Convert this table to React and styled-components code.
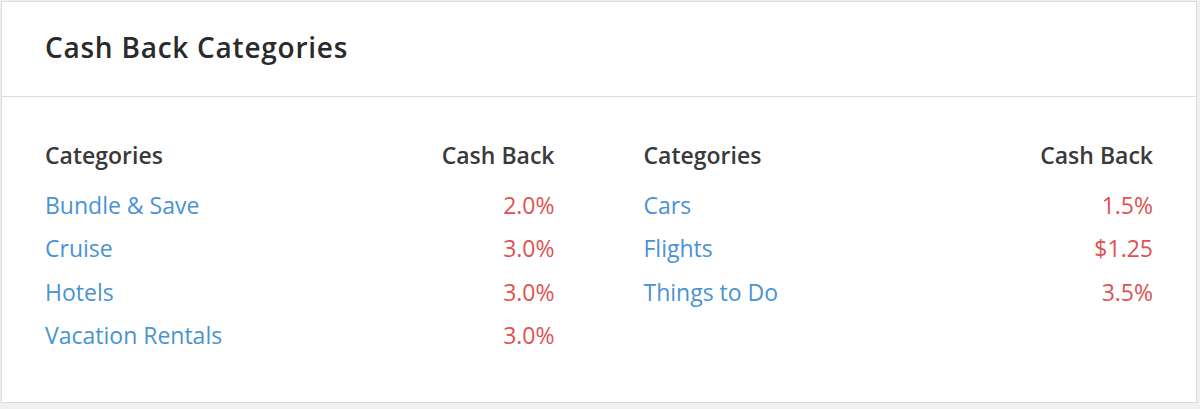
import styled, { createGlobalStyle } from "styled-components";

const GlobalStyle = createGlobalStyle`
  html, body {
    margin: 0;
    padding: 0;
    background: #f0f0f0;
  }
  body {
    font-family: "Open Sans", "Liberation Sans", sans-serif;
  }
`;

const leftColumn = [
  { name: "Bundle & Save", value: "2.0%" },
  { name: "Cruise", value: "3.0%" },
  { name: "Hotels", value: "3.0%" },
  { name: "Vacation Rentals", value: "3.0%" },
];

const rightColumn = [
  { name: "Cars", value: "1.5%" },
  { name: "Flights", value: "$1.25" },
  { name: "Things to Do", value: "3.5%" },
];

const Page = styled.div`
  padding: 1px 3px 0 1px;
  height: 409px;
  box-sizing: border-box;
`;

const Card = styled.section`
  background: #fff;
  border: 1px solid #dcdcdc;
  height: 402px;
  box-sizing: border-box;
`;

const CardHeader = styled.header`
  height: 95px;
  box-sizing: border-box;
  border-bottom: 1px solid #dcdcdc;
  display: flex;
  align-items: center;
  padding: 0 43px 4px;
`;

const Title = styled.h2`
  margin: 0;
  font-size: 28px;
  font-weight: 600;
  color: #2a2a2a;
  letter-spacing: 0.75px;
`;

const CardBody = styled.div`
  display: grid;
  grid-template-columns: 1fr 1fr;
  column-gap: 89px;
  padding: 35px 43px 0 43px;
`;

const Table = styled.div`
  display: flex;
  flex-direction: column;
`;

const Row = styled.div`
  display: flex;
  justify-content: space-between;
  align-items: center;
  height: ${(p) => (p.$head ? "46px" : "43.5px")};
  margin-bottom: ${(p) => (p.$head ? "5px" : "0")};
  font-size: 23px;
`;

const HeadCell = styled.span`
  font-weight: 600;
  color: #3a3a3a;
`;

const NameCell = styled.span`
  color: #4a93d3;
`;

const ValueCell = styled.span`
  color: #e05252;
`;

const CategoryTable = ({ rows }) => (
  <Table>
    <Row $head>
      <HeadCell>Categories</HeadCell>
      <HeadCell>Cash Back</HeadCell>
    </Row>
    {rows.map((r) => (
      <Row key={r.name}>
        <NameCell>{r.name}</NameCell>
        <ValueCell>{r.value}</ValueCell>
      </Row>
    ))}
  </Table>
);

export default function App() {
  return (
    <Page>
      <GlobalStyle />
      <Card>
        <CardHeader>
          <Title>Cash Back Categories</Title>
        </CardHeader>
        <CardBody>
          <CategoryTable rows={leftColumn} />
          <CategoryTable rows={rightColumn} />
        </CardBody>
      </Card>
    </Page>
  );
}
